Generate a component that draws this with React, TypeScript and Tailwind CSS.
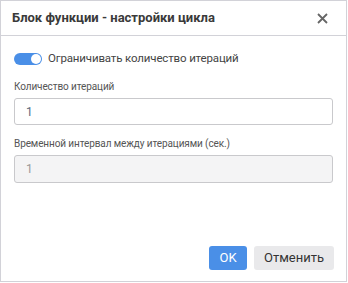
import React from 'react';

export default function App() {
  return (
    <div className="w-[348px] h-[283px] bg-white" style={{ fontFamily: 'Roboto, "Noto Sans", sans-serif' }}>
      <div className="w-[347px] h-[282px] border border-[#d2d2d8] flex flex-col">
        {/* Header */}
        <div className="h-[35px] border-b border-[#d2d2d8] flex items-center justify-between pl-[11px] pr-[18px]">
          <span className="text-[13px] font-bold text-[#3a3a3a]">Блок функции - настройки цикла</span>
          <svg width="11" height="11" viewBox="0 0 11 11" className="text-[#666]">
            <path d="M1 1L10 10M10 1L1 10" stroke="currentColor" strokeWidth="1.8" />
          </svg>
        </div>

        {/* Body */}
        <div className="flex-1 px-[13px] pt-[16px]">
          <label className="flex items-center gap-[6px] h-[14px]">
            <span className="relative w-[28px] h-[12px] rounded-full bg-[#4a8fe7] inline-block shrink-0">
              <span className="absolute right-[1px] top-[1px] w-[10px] h-[10px] rounded-full bg-white" />
            </span>
            <span className="text-[11.5px] tracking-[-0.15px] text-[#444]">Ограничивать количество итераций</span>
          </label>

          <div className="mt-[14px] text-[10px] tracking-[-0.1px] text-[#555] leading-[14px]">Количество итераций</div>
          <div className="mt-[4px] h-[27px] border border-[#c9c9cc] rounded-[3px] flex items-center px-[11px] text-[12px] text-[#5b6b7e]">
            1
          </div>

          <div className="mt-[12px] text-[10px] tracking-[-0.1px] text-[#555] leading-[14px]">Временной интервал между итерациями (сек.)</div>
          <div className="mt-[4px] h-[28px] border border-[#c9c9cc] rounded-[3px] bg-[#f4f4f5] flex items-center px-[11px] text-[12px] text-[#999]">
            1
          </div>
        </div>

        {/* Footer */}
        <div className="flex justify-end gap-[7px] pr-[12px] pb-[11px]">
          <button className="w-[38px] h-[24px] rounded-[3px] bg-[#4a8fe7] text-white text-[13px]">OK</button>
          <button className="w-[80px] h-[24px] rounded-[3px] bg-[#e9e9eb] text-[#333] text-[13px]">Отменить</button>
        </div>
      </div>
    </div>
  );
}
